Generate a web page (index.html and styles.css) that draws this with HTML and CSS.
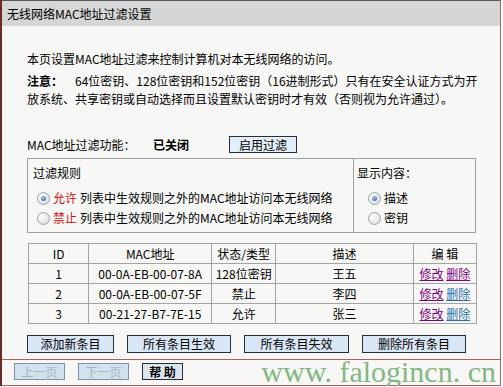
FILE: index.html
```html
<!DOCTYPE html>
<html lang="zh-CN">
<head>
  <meta charset="UTF-8">
  <title>无线网络MAC地址过滤设置</title>
  <link rel="stylesheet" href="styles.css">
</head>
<body>

  <div class="panel">
    <!-- Title bar -->
    <div class="title">无线网络MAC地址过滤设置</div>

    <div class="content">
      <p class="intro">本页设置MAC地址过滤来控制计算机对本无线网络的访问。</p>
      <p class="note"><b>注意：</b><span class="gap"></span>64位密钥、128位密钥和152位密钥（16进制形式）只有在安全认证方式为开<br>放系统、共享密钥或自动选择而且设置默认密钥时才有效（否则视为允许通过）。</p>

      <div class="status-row">
        <span class="label">MAC地址过滤功能：</span>
        <b class="state">已关闭</b>
        <button class="btn btn-on">启用过滤</button>
      </div>

      <!-- Rule and display options -->
      <div class="rules">
        <div class="rule-box">
          <div class="box-title">过滤规则</div>
          <div class="opt"><span class="radio on"></span><span class="red">允许</span> 列表中生效规则之外的MAC地址访问本无线网络</div>
          <div class="opt"><span class="radio"></span><span class="red">禁止</span> 列表中生效规则之外的MAC地址访问本无线网络</div>
        </div>
        <div class="show-box">
          <div class="box-title">显示内容：</div>
          <div class="opt"><span class="radio on"></span>描述</div>
          <div class="opt"><span class="radio"></span>密钥</div>
        </div>
      </div>

      <!-- Entry list -->
      <table class="list">
        <tr>
          <th class="c-id">ID</th>
          <th class="c-mac">MAC地址</th>
          <th class="c-type">状态/类型</th>
          <th class="c-desc">描述</th>
          <th class="c-edit">编 辑</th>
        </tr>
        <tr>
          <td>1</td>
          <td>00-0A-EB-00-07-8A</td>
          <td>128位密钥</td>
          <td>王五</td>
          <td><a href="#" class="visited">修改</a> <a href="#" class="visited">删除</a></td>
        </tr>
        <tr>
          <td>2</td>
          <td>00-0A-EB-00-07-5F</td>
          <td>禁止</td>
          <td>李四</td>
          <td><a href="#" class="visited">修改</a> <a href="#">删除</a></td>
        </tr>
        <tr>
          <td>3</td>
          <td>00-21-27-B7-7E-15</td>
          <td>允许</td>
          <td>张三</td>
          <td><a href="#" class="visited">修改</a> <a href="#">删除</a></td>
        </tr>
      </table>

      <div class="actions">
        <button class="btn w87">添加新条目</button>
        <button class="btn w104">所有条目生效</button>
        <button class="btn w105">所有条目失效</button>
        <button class="btn w104">删除所有条目</button>
      </div>
    </div>

    <!-- Paging -->
    <div class="footer">
      <button class="btn pager" disabled>上一页</button>
      <button class="btn pager" disabled>下一页</button>
      <button class="btn help">帮 助</button>
    </div>

    <div class="watermark">www. falogincn. cn</div>
  </div>

</body>
</html>
```

FILE: styles.css
```css
body {
  margin: 0;
  background: #fff;
  font-family: "Noto Sans CJK SC", sans-serif;
  font-size: 12px;
  color: #000;
}

.panel {
  position: relative;
  width: 498px;
  border-left: 2px solid #6e2b25;
  border-right: 1px solid #b86060;
  background: #f7f7f5;
}

.title {
  height: 25px;
  line-height: 26px;
  border-top: 1px solid #5a5a5a;
  background: #d6d6d6;
  padding-left: 5px;
}

.content {
  padding-left: 25px;
}

p {
  margin: 0;
  line-height: 18px;
}

.intro {
  margin-top: 24px;
}

.note {
  margin-top: 4px;
}

.gap {
  display: inline-block;
  width: 12px;
}

.status-row {
  margin-top: 28px;
  height: 17px;
  display: flex;
  align-items: center;
}

.label {
  width: 126px;
}

.state {
  width: 76px;
}

/* Buttons */
.btn {
  font-family: "Noto Sans CJK SC", sans-serif;
  font-size: 12px;
  height: 18px;
  padding: 0;
  line-height: 16px;
  border: 1px solid #24303c;
  background: #d9e6f5;
  color: #000;
}

.btn-on {
  width: 68px;
  height: 17px;
  background: #e4eef8;
}

.rules {
  margin-top: 5px;
  width: 449px;
  height: 75px;
  box-sizing: border-box;
  border: 1px solid #a0a0a0;
  display: flex;
}

.rule-box {
  width: 320px;
  border-right: 1px solid #a0a0a0;
  padding-left: 5px;
}

.show-box {
  flex: 1;
  padding-left: 3px;
}

.box-title {
  padding-top: 5px;
  line-height: 18px;
}

.opt {
  line-height: 20px;
  display: flex;
  align-items: center;
  padding-left: 4px;
}

.box-title + .opt {
  margin-top: 6px;
}

.show-box .opt {
  padding-left: 11px;
}

.radio {
  position: relative;
  width: 11px;
  height: 11px;
  border-radius: 50%;
  border: 1px solid #98a6b2;
  background: radial-gradient(circle at 35% 35%, #fff, #d6d6d6);
  margin-right: 3px;
}

.radio.on::after {
  content: "";
  position: absolute;
  left: 3px;
  top: 3px;
  width: 5px;
  height: 5px;
  border-radius: 50%;
  background: radial-gradient(circle at 40% 35%, #9ccbee, #1d5a8e);
}

.red {
  color: #d01010;
  margin-right: 3px;
}

/* Entry table */
.list {
  margin-top: 10px;
  margin-left: 1px;
  border-collapse: collapse;
  width: 449px;
}

.list th,
.list td {
  border: 1px solid #a4a4a4;
  height: 19px;
  padding: 0;
  text-align: center;
  font-weight: normal;
  line-height: 18px;
}

.c-id { width: 60px; }
.c-mac { width: 123px; }
.c-type { width: 64px; }
.c-desc { width: 138px; }
.c-edit { width: 63px; }

.list a {
  color: #2a70b0;
}

.list a.visited {
  color: #800080;
}

.actions {
  margin-top: 11px;
  display: flex;
  gap: 13px;
}

.w87 { width: 87px; }
.w104 { width: 104px; }
.w105 { width: 105px; }

.footer {
  margin-top: 6px;
  border-top: 1px solid #a86060;
  border-bottom: 1px solid #a86060;
  padding: 3px 0 0 12px;
  box-sizing: border-box;
  height: 27px;
  display: flex;
  gap: 13px;
}

.pager {
  width: 51px;
  height: 17px;
  border-color: #7a93a8;
  background: #d2e1ee;
  color: #a8b4c0;
}

.help {
  width: 41px;
  height: 17px;
  font-weight: bold;
  background: #dde5ec;
}

.watermark {
  position: absolute;
  right: 4px;
  bottom: 0;
  font-family: "Liberation Serif", serif;
  font-size: 30px;
  line-height: 28px;
  color: #6fae6f;
  opacity: 0.85;
  white-space: nowrap;
}
```
